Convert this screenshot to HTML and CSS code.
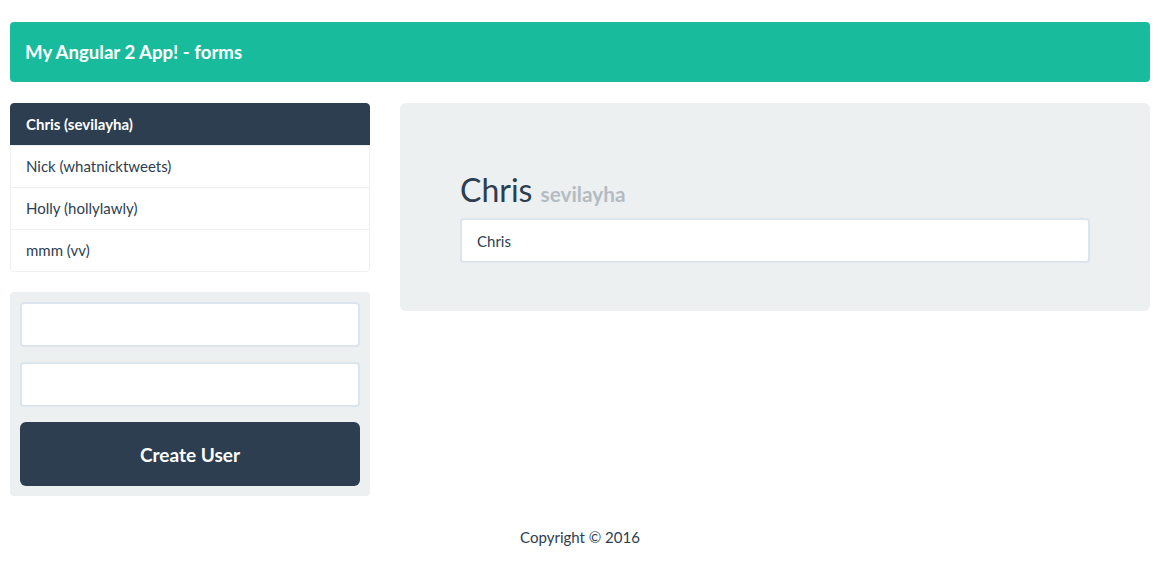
FILE: index.html
```html
<!DOCTYPE html>
<html>
<head>
<meta charset="utf-8">
<link rel="stylesheet" href="styles.css">
</head>
<body>
<div class="page">
  <header class="app-header">My Angular 2 App! - forms</header>
  <div class="row">
    <div class="col-left">
      <ul class="list-group">
        <li class="list-item active">Chris (sevilayha)</li>
        <li class="list-item">Nick (whatnicktweets)</li>
        <li class="list-item">Holly (hollylawly)</li>
        <li class="list-item">mmm (vv)</li>
      </ul>
      <form class="well">
        <div class="form-group"><input class="form-control" type="text"></div>
        <div class="form-group"><input class="form-control" type="text"></div>
        <button type="button" class="btn-create">Create User</button>
      </form>
    </div>
    <div class="col-right">
      <div class="jumbotron">
        <h2 class="user-name">Chris <small class="user-handle">sevilayha</small></h2>
        <input class="form-control" type="text" value="Chris">
      </div>
    </div>
  </div>
  <footer class="footer">Copyright © 2016</footer>
</div>
</body>
</html>
```
FILE: styles.css
```css
* { box-sizing: border-box; }
html, body { margin: 0; padding: 0; background: #fff; }
body {
  font-family: Lato, "Open Sans", sans-serif;
  font-size: 15px;
  line-height: 1.42857;
  color: #2c3e50;
}
.page { padding: 22px 12px 0 10px; }
.app-header {
  background: #18bc9c;
  color: #fff;
  border-radius: 4px;
  height: 60px;
  display: flex;
  align-items: center;
  padding: 0 15px;
  font-size: 18.6px;
  font-weight: 700;
  margin-bottom: 21px;
}
.row { display: flex; gap: 30px; align-items: flex-start; }
.col-left { width: 360px; flex: none; }
.col-right { flex: 1; }
.list-group { list-style: none; margin: 0 0 20px; padding: 0; }
.list-item {
  height: 43px;
  display: flex;
  align-items: center;
  padding: 0 15px;
  border: 1px solid #ecf0f1;
  margin-bottom: -1px;
  background: #fff;
  line-height: 21px;
}
.list-item:first-child { border-radius: 4px 4px 0 0; }
.list-item:last-child { border-radius: 0 0 4px 4px; margin-bottom: 0; }
.list-item.active {
  background: #2c3e50;
  border-color: #2c3e50;
  color: #fff;
  font-weight: 700;
}
.well {
  background: #ecf0f1;
  border-radius: 4px;
  padding: 10px;
  margin: 0;
}
.form-group { margin-bottom: 15px; }
.form-control {
  display: block;
  width: 100%;
  height: 45px;
  padding: 10px 15px;
  border: 2px solid #dce4ec;
  border-radius: 4px;
  background: #fff;
  font-family: Lato, "Open Sans", sans-serif;
  font-size: 15px;
  color: #2c3e50;
  outline: none;
}
.btn-create {
  display: block;
  width: 100%;
  height: 64px;
  border: 0;
  border-radius: 6px;
  background: #2c3e50;
  color: #fff;
  font-family: Lato, "Open Sans", sans-serif;
  font-size: 19px;
  font-weight: 700;
}
.jumbotron {
  background: #ecf0f1;
  border-radius: 6px;
  padding: 48px 60px 48px;
}
.user-name {
  margin: 21px 0 11px;
  font-size: 32px;
  font-weight: 400;
  line-height: 1.1;
}
.user-handle {
  font-size: 20.8px;
  font-weight: 700;
  color: #b4bcc2;
}
.footer {
  text-align: center;
  margin-top: 31px;
}
```
